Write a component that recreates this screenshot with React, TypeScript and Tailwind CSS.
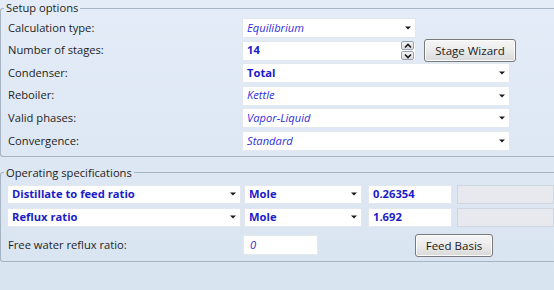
import React from "react";

const font = { fontFamily: '"Open Sans", "Noto Sans", sans-serif' };

function Arrow() {
  return (
    <svg width="6" height="4" viewBox="0 0 6 4" className="shrink-0">
      <path d="M0 0.5h6L3 3.5z" fill="#1a1a1a" />
    </svg>
  );
}

function Select({
  value,
  width,
  variant,
}: {
  value: string;
  width: string;
  variant: "italic" | "bold";
}) {
  return (
    <div
      className={`${width} h-full flex items-center justify-between bg-white border border-[#e3e8ef] pl-[4px] pr-[4px]`}
    >
      <span
        className={
          variant === "italic"
            ? "italic text-[#3030d8] text-[11.2px]"
            : "font-bold text-[#1c1cc8] text-[11.2px]"
        }
      >
        {value}
      </span>
      <Arrow />
    </div>
  );
}

function WinButton({ label, width }: { label: string; width: string }) {
  return (
    <button
      type="button"
      className={`${width} h-[23px] rounded-[3px] border border-[#7a7a7a] bg-gradient-to-b from-[#f6f6f6] via-[#ebebeb] to-[#d9d9d9] text-[11.5px] text-[#1a1a1a] shadow-[inset_0_0_0_1px_#fcfcfc]`}
    >
      {label}
    </button>
  );
}

function Spinner() {
  return (
    <div className="flex flex-col gap-[1px] mr-[1px]">
      {["M1 4.5L4 1.5L7 4.5", "M1 1.5L4 4.5L7 1.5"].map((d) => (
        <div
          key={d}
          className="w-[13px] h-[9px] rounded-[2px] border border-[#9aa3ad] bg-gradient-to-b from-[#f4f4f4] to-[#d8dde3] flex items-center justify-center"
        >
          <svg width="8" height="6" viewBox="0 0 8 6">
            <path d={d} fill="none" stroke="#1a1a1a" strokeWidth="1.6" />
          </svg>
        </div>
      ))}
    </div>
  );
}

const setupRows: { label: string; value: string; variant: "italic" | "bold" }[] = [
  { label: "Condenser:", value: "Total", variant: "bold" },
  { label: "Reboiler:", value: "Kettle", variant: "italic" },
  { label: "Valid phases:", value: "Vapor-Liquid", variant: "italic" },
  { label: "Convergence:", value: "Standard", variant: "italic" },
];

export default function App() {
  return (
    <div
      style={font}
      className="w-[554px] h-[290px] overflow-hidden bg-gradient-to-b from-[#e3ecf7] to-[#d9e4f1] text-[11.2px] text-[#1e1e1e]"
    >
      <fieldset className="border-t border-b border-l border-[#a7b4c3] rounded-l-[3px] pb-[5px]">
        <legend className="ml-[3px] px-[2px] leading-[16px]">Setup options</legend>
        <div className="flex flex-col gap-[2.6px] pt-[2px]">
          <div className="flex items-center h-[20px]">
            <span className="w-[241px] pl-[7px]">Calculation type:</span>
            <Select value="Equilibrium" width="w-[174px]" variant="italic" />
          </div>
          <div className="flex items-center h-[20px]">
            <span className="w-[241px] pl-[7px]">Number of stages:</span>
            <div className="w-[174px] h-full flex items-center justify-between bg-white border border-[#e3e8ef] pl-[4px]">
              <span className="font-bold text-[#1c1cc8]">14</span>
              <Spinner />
            </div>
            <div className="ml-[8px] flex items-center">
              <WinButton label="Stage Wizard" width="w-[92px]" />
            </div>
          </div>
          {setupRows.map((r) => (
            <div key={r.label} className="flex items-center h-[20px]">
              <span className="w-[241px] pl-[7px]">{r.label}</span>
              <Select value={r.value} width="w-[268px]" variant={r.variant} />
            </div>
          ))}
        </div>
      </fieldset>

      <fieldset className="mt-[8px] border-t border-b border-l border-[#a7b4c3] rounded-l-[3px] pb-[4px]">
        <legend className="ml-[3px] px-[2px] leading-[16px]">Operating specifications</legend>
        <div className="flex flex-col gap-[4px] pt-[4px] pl-[6px]">
          {[
            { spec: "Distillate to feed ratio", val: "0.26354" },
            { spec: "Reflux ratio", val: "1.692" },
          ].map((r) => (
            <div key={r.spec} className="flex items-center h-[19px] gap-[3px]">
              <Select value={r.spec} width="w-[234px]" variant="bold" />
              <Select value="Mole" width="w-[118px]" variant="bold" />
              <div className="ml-[3px] w-[84px] h-full flex items-center bg-white border border-[#e3e8ef] pl-[4px]">
                <span className="font-bold text-[#1c1cc8]">{r.val}</span>
              </div>
              <div className="ml-[2px] flex-1 h-full bg-[#e7e9ee] border border-[#cfd6df]" />
            </div>
          ))}
          <div className="flex items-center h-[23px] mt-[3px]">
            <span className="w-[236px] pl-[1px]">Free water reflux ratio:</span>
            <div className="w-[75px] h-[20px] flex items-center bg-white border border-[#e3e8ef] pl-[6px]">
              <span className="italic text-[#3030d8]">0</span>
            </div>
            <div className="ml-[97px]">
              <WinButton label="Feed Basis" width="w-[78px]" />
            </div>
          </div>
        </div>
      </fieldset>
    </div>
  );
}
